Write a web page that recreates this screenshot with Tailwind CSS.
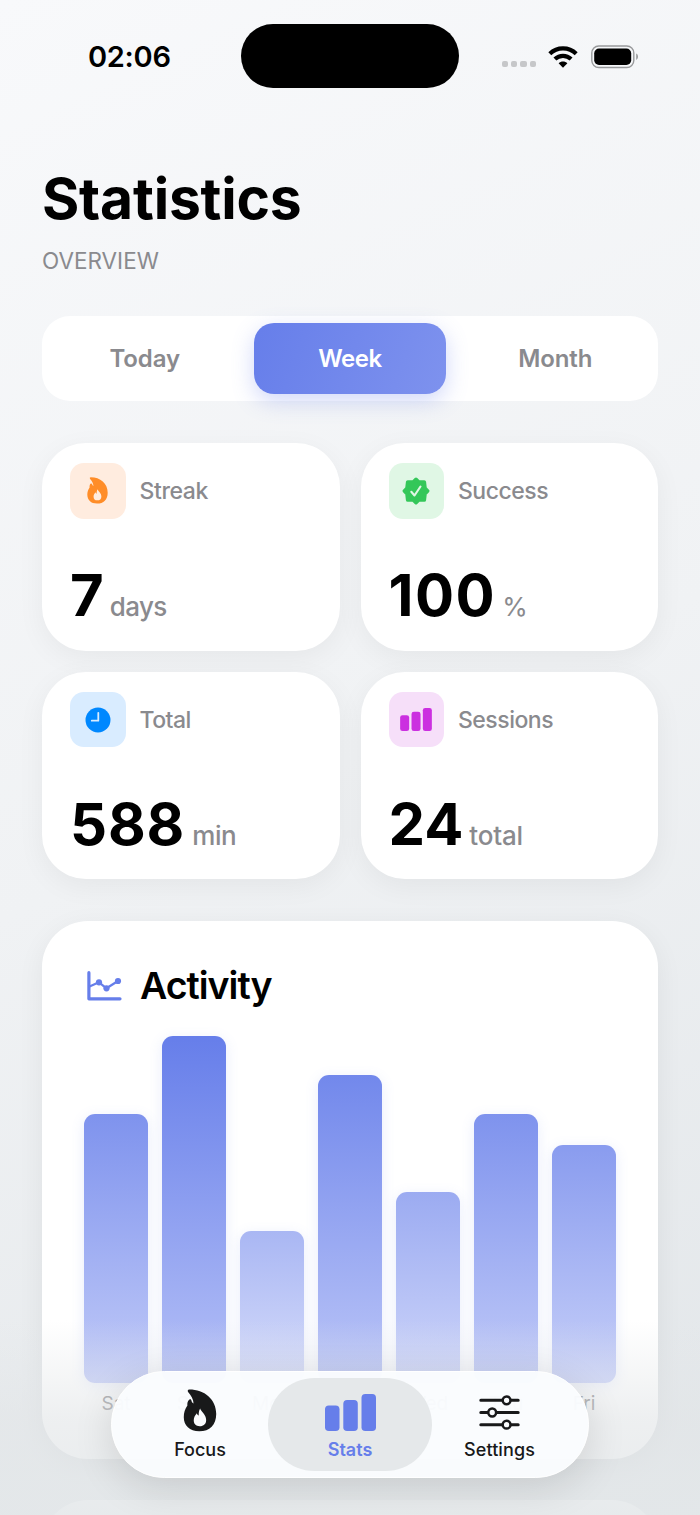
<!DOCTYPE html>
<html lang="en">
<head>
    <meta charset="UTF-8">
    <meta name="viewport" content="width=device-width, initial-scale=1.0">
    <title>Statistics</title>
    <script src="https://cdn.jsdelivr.net/npm/@tailwindcss/browser@4"></script>
    <style>
        body { font-family: 'Inter', sans-serif; }
    </style>
</head>
<body class="h-[1515px] w-[700px] overflow-hidden">

    <svg class="hidden">
        <symbol id="flame" viewBox="0 0 34 44">
            <path fill="currentColor" fill-rule="evenodd" d="M6 .5C4.300.5 4 2 5 3.200C7.800 6.600 10.400 10.500 10.400 14.800C9.200 14.200 8.500 13.200 8.200 11.800C7.900 10.400 6.500 10.200 5.600 11.200C4.200 12.800 3.900 14.800 4.100 17C1.600 20.500.4 24.500.4 29C.4 37.500 6.300 43.300 16.300 43.300C27 43.300 33.600 36.500 33.600 25.500C33.600 10.500 21.500.5 6 .5ZM16.700 38C12.700 38 10.600 35.600 10.600 32C10.600 28.800 12.200 26.700 13.800 24.800C14.200 26.200 14.700 26.800 15.700 27.100C15.600 24.200 15.900 22 17.200 20C17.900 23.200 23.300 26 23.300 31.600C23.300 35.600 20.800 38 16.700 38Z"/>
        </symbol>
        <symbol id="bars" viewBox="0 0 51 37">
            <g fill="currentColor"><rect x="0" y="11.500" width="14.500" height="25.500" rx="3.800"/><rect x="18.300" y="6" width="14.500" height="31" rx="3.800"/><rect x="36.500" y="0" width="14.500" height="37" rx="3.800"/></g>
        </symbol>
    </svg>

    <div class="relative h-[1515px] bg-linear-[155deg] from-[#f8f9fb] via-[#f0f2f4] to-[#e2e6e9] overflow-hidden text-black">

        <!-- Status bar -->
        <header class="h-28 pt-6 pl-[88px] pr-[61px] flex items-start">
            <div class="w-[153px] pt-[13px] text-[29px] leading-[40px] font-semibold tracking-[-0.3px]">02:06</div>
            <div class="w-[218px] h-16 rounded-full bg-black"></div>
            <div class="ml-auto h-16 flex items-center gap-[12px]">
                <div class="flex gap-[3px] pt-4">
                    <i class="size-[6.300px] rounded-[2px] bg-[#c6c7c9]"></i>
                    <i class="size-[6.300px] rounded-[2px] bg-[#c6c7c9]"></i>
                    <i class="size-[6.300px] rounded-[2px] bg-[#c6c7c9]"></i>
                    <i class="size-[6.300px] rounded-[2px] bg-[#c6c7c9]"></i>
                </div>
                <svg class="w-[30px] h-[22px] mt-px mr-px" viewBox="0 0 30 22"><g fill="none" stroke="#000" stroke-width="4.200"><path d="M1.800 7.700C9.200.6 20.800.6 28.200 7.700"/><path d="M6.900 13C11.500 8.700 18.500 8.700 23.100 13"/></g><path d="M15 21.800L10.600 17.300C13 14.900 17 14.900 19.400 17.300Z"/></svg>
                <svg class="w-12 h-6 mt-px" viewBox="0 0 48 24"><rect x=".8" y="1" width="42" height="21.500" rx="7" fill="none" stroke="#98999b" stroke-width="1.400"/><rect x="3.200" y="3.500" width="37" height="16.500" rx="4.800"/><path d="M45.200 8.600V15C47.600 13.800 47.600 9.800 45.200 8.600Z" fill="#98999b"/></svg>
            </div>
        </header>

        <main class="px-[42px]">
            <h1 class="mt-[52px] text-[57px] leading-[70px] font-bold tracking-[-0.2px]">Statistics</h1>
            <p class="mt-[12px] text-[22.500px] leading-[30px] text-[#8a8a8e]">OVERVIEW</p>

            <div class="mt-[40px] h-[85px] p-[7px] rounded-[28px] bg-white grid grid-cols-3 gap-[14px] text-[24px] font-semibold tracking-[-0.1px] text-[#8a8a8e]">
                <button class="pt-px">Today</button>
                <button class="pt-px rounded-[20px] bg-linear-[110deg] from-[#667eea] to-[#7e92ee] text-white font-semibold tracking-[-0.4px] shadow-[0_7px_22px_rgba(102,126,234,0.3)]">Week</button>
                <button class="pt-px">Month</button>
            </div>

            <section class="mt-[42px] grid grid-cols-2 gap-[21px]">
                <div class="h-[207.500px] px-7 pt-5 rounded-[44px] bg-white shadow-[0_7px_28px_rgba(0,0,0,0.05)]">
                    <div class="flex items-center gap-[14px]">
                        <div class="size-[55.500px] rounded-[14px] bg-[#ffecdf] text-[#ff8d28] flex items-center justify-center"><svg class="w-[21px] h-[27px] mr-px"><use href="#flame"/></svg></div>
                        <span class="text-[23px] font-medium tracking-[-0.4px] text-[#8a8a8e]">Streak</span>
                    </div>
                    <div class="mt-[39px] flex items-baseline gap-[6px]"><b class="text-[58px] leading-[74px] font-bold">7</b><span class="text-[26px] font-medium tracking-[-0.6px] text-[#8a8a8e]">days</span></div>
                </div>
                <div class="h-[207.500px] px-7 pt-5 rounded-[44px] bg-white shadow-[0_7px_28px_rgba(0,0,0,0.05)]">
                    <div class="flex items-center gap-[14px]">
                        <div class="size-[55.500px] rounded-[14px] bg-[#e0f7e5] text-[#34c759] flex items-center justify-center">
                            <svg class="size-7" viewBox="0 0 28 28"><path fill="currentColor" stroke="currentColor" stroke-width="3.600" stroke-linejoin="round" d="M14 2.400L16.800 5H22.300L23 11.200L25.600 14L23 16.800L22.300 23H16.800L14 25.600L11.200 23H5.700L5 16.800L2.400 14L5 11.200L5.700 5H11.200Z"/><path d="M9.300 14.800L12.500 18.500L18.500 9.500" fill="none" stroke="#e0f7e5" stroke-width="2.100" stroke-linecap="round" stroke-linejoin="round"/></svg>
                        </div>
                        <span class="text-[23px] font-medium tracking-[-0.5px] text-[#8a8a8e]">Success</span>
                    </div>
                    <div class="mt-[39px] flex items-baseline gap-[6px]"><b class="text-[58px] leading-[74px] font-bold tracking-[1.500px]">100</b><span class="text-[26px] text-[#8a8a8e]">%</span></div>
                </div>
                <div class="h-[207.500px] px-7 pt-5 rounded-[44px] bg-white shadow-[0_7px_28px_rgba(0,0,0,0.05)]">
                    <div class="flex items-center gap-[14px]">
                        <div class="size-[55.500px] rounded-[14px] bg-[#d9ecff] text-[#0088ff] flex items-center justify-center">
                            <svg class="size-[26px] mt-px" viewBox="0 0 26 26"><circle cx="13" cy="13" r="12.500" fill="currentColor"/><path d="M13.300 5.800V13.700H6.800" fill="none" stroke="#d9ecff" stroke-width="1.800" stroke-linecap="round" stroke-linejoin="round"/></svg>
                        </div>
                        <span class="pt-px text-[23px] font-medium tracking-[-0.5px] text-[#8a8a8e]">Total</span>
                    </div>
                    <div class="mt-[40px] flex items-baseline gap-[7px]"><b class="text-[58px] leading-[74px] font-bold tracking-[0.9px]">588</b><span class="text-[26px] font-medium tracking-[-0.4px] text-[#8a8a8e]">min</span></div>
                </div>
                <div class="h-[207.500px] px-7 pt-5 rounded-[44px] bg-white shadow-[0_7px_28px_rgba(0,0,0,0.05)]">
                    <div class="flex items-center gap-[14px]">
                        <div class="size-[55.500px] rounded-[14px] bg-[#f6dff9] text-[#cb30e0] flex items-center justify-center"><svg class="w-8 h-[23px] mt-px"><use href="#bars"/></svg></div>
                        <span class="pt-px text-[23px] font-medium tracking-[-0.5px] text-[#8a8a8e]">Sessions</span>
                    </div>
                    <div class="mt-[40px] flex items-baseline gap-[6px]"><b class="text-[58px] leading-[74px] font-bold">24</b><span class="text-[26px] font-medium tracking-[-0.2px] text-[#8a8a8e]">total</span></div>
                </div>
            </section>

            <section class="mt-[42px] h-[537.500px] px-[42px] pt-[42px] rounded-[46px] bg-white shadow-[0_7px_28px_rgba(0,0,0,0.06)]">
                <div class="flex items-center gap-[18px] pl-[3px]">
                    <svg class="w-[35px] h-[30px]" viewBox="0 0 35 30"><g fill="none" stroke="#667eea" stroke-linecap="round" stroke-linejoin="round"><path stroke-width="3.200" d="M1.900 1.700V27.800H33"/><path stroke-width="2.200" d="M2.500 15.500L12 11.300L19.500 17.300L31 10"/></g><g fill="#667eea"><circle cx="12" cy="11.300" r="3.100"/><circle cx="19.500" cy="17.300" r="3.100"/><circle cx="31" cy="10" r="3.100"/></g></svg>
                    <h2 class="text-[37.500px] leading-[46px] font-semibold tracking-[-1px]">Activity</h2>
                </div>
                <div id="chart" class="mt-[27px] h-[346.500px] flex items-end gap-[14px]"></div>
                <div class="mt-[6px] flex gap-[14px] text-center text-[19px] leading-[30px] text-[#8a8a8e]">
                    <span class="w-16">Sat</span><span class="w-16">Sun</span><span class="w-16">Mon</span><span class="w-16">Tue</span><span class="w-16">Wed</span><span class="w-16">Thu</span><span class="w-16">Fri</span>
                </div>
            </section>

            <section class="mt-[41.500px] h-[200px] rounded-[46px] bg-white"></section>
        </main>

        <!-- Fade behind the tab bar -->
        <div class="absolute inset-x-0 bottom-0 h-[195px] bg-linear-to-b from-[#e2e5e7]/0 via-[#e2e5e7]/60 to-[#e3e7e9]/85"></div>

        <nav class="absolute left-[111px] top-[1371px] w-[478px] h-[107px] p-[7px] rounded-full bg-[#fafcfe]/96 border border-white shadow-[0_10px_40px_rgba(0,0,0,0.12)] flex text-[18px] leading-[24px] font-medium text-[#18191a]">
            <a class="w-[149px] pl-[13px] pt-[10px] flex flex-col items-center"><svg class="w-[34px] h-[43px]"><use href="#flame"/></svg><span class="mt-[6px]">Focus</span></a>
            <a class="w-[164px] -my-px rounded-full bg-[#e5e8ea] pt-[16px] flex flex-col items-center text-[#667eea] font-semibold"><svg class="w-[51px] h-[37px]"><use href="#bars"/></svg><span class="mt-[7px]">Stats</span></a>
            <a class="w-[149px] pr-[14px] pt-[16px] flex flex-col items-center">
                <svg class="w-[41px] h-[35px]" viewBox="0 0 41 35"><g stroke="#18191a" stroke-width="3" stroke-linecap="round"><path d="M1.800 5.300H39.200M1.800 17.500H39.200M1.800 29.700H39.200"/><g fill="#fafcfe" stroke-width="2.500"><circle cx="27.600" cy="5.300" r="3.900"/><circle cx="13.200" cy="17.500" r="3.900"/><circle cx="27.600" cy="29.700" r="3.900"/></g></g></svg>
                <span class="mt-[8px] tracking-[0.1px]">Settings</span>
            </a>
        </nav>
    </div>

    <script>
        // height in px and opacity of the top / bottom of each bar
        const days = [[268.5, .84, .42], [346.5, 1, .5], [152, .56, .28], [307.5, .92, .46], [190.5, .65, .33], [268.5, .84, .42], [237.5, .77, .38]];
        document.getElementById('chart').innerHTML = days.map(([h, a, b]) =>
            `<div class="w-16 rounded-[11px] shadow-[0_3px_14px_rgba(102,126,234,0.14)]" style="height:${h}px;background:linear-gradient(rgba(102,126,234,${a}),rgba(108,130,238,${b}))"></div>`
        ).join('');
    </script>
</body>
</html>
